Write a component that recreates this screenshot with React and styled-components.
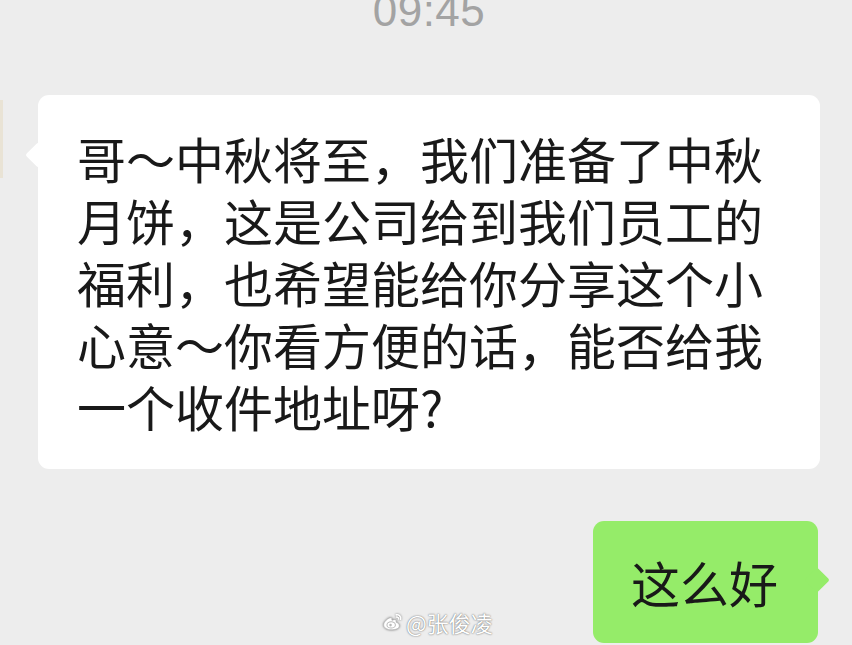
import React from 'react';
import styled, { createGlobalStyle } from 'styled-components';

const GlobalStyle = createGlobalStyle`
  html, body {
    margin: 0;
    padding: 0;
    background: #ededed;
    overflow: hidden;
  }
  body {
    font-family: "Noto Sans CJK SC", "Noto Sans", sans-serif;
  }
`;

const Screen = styled.div`
  width: 852px;
  height: 645px;
  background: #ededed;
  position: relative;
  overflow: hidden;
  display: flex;
  flex-direction: column;
`;

const Time = styled.div`
  font-family: "Liberation Sans", Arial, sans-serif;
  font-size: 44px;
  line-height: 44px;
  height: 33px;
  color: #a3a3a3;
  text-align: center;
  margin-top: -11px;
  padding-left: 6px;
  letter-spacing: 0.5px;
`;

const Row = styled.div`
  display: flex;
  align-items: flex-start;
  justify-content: ${(p) => (p.$mine ? 'flex-end' : 'flex-start')};
  margin-top: ${(p) => p.$top}px;
  padding-right: ${(p) => (p.$mine ? 34 : 32)}px;
`;

const Avatar = styled.div`
  width: 3px;
  height: 78px;
  margin-top: 5px;
  background: #e9e3d5;
  margin-right: 35px;
  flex-shrink: 0;
`;

const Bubble = styled.div`
  position: relative;
  background: ${(p) => (p.$mine ? '#95ec69' : '#ffffff')};
  border-radius: 11px;
  color: #191919;
  font-size: 49px;
  line-height: 62px;
  padding: ${(p) => (p.$mine ? '30px 40px 30px 38px' : '32px 45px 32px 39px')};
  width: ${(p) => (p.$mine ? 'auto' : '698px')};

  &::before {
    content: '';
    position: absolute;
    width: 18px;
    height: 18px;
    background: inherit;
    border-radius: 2px;
    transform: rotate(45deg);
    top: ${(p) => (p.$mine ? '50px' : '51px')};
    ${(p) => (p.$mine ? 'right: -8px;' : 'left: -9px;')}
  }
`;

const BubbleText = styled.span`
  position: relative;
  display: block;
`;

const Watermark = styled.div`
  position: absolute;
  left: 382px;
  top: 608px;
  display: flex;
  align-items: center;
  gap: 2px;
  color: #ffffff;
  font-size: 22px;
  line-height: 28px;
  text-shadow: 0 0 2px rgba(0, 0, 0, 0.45), 0 0 1px rgba(0, 0, 0, 0.35);
`;

const WeiboIcon = () => (
  <svg width="22" height="22" viewBox="0 0 24 24" style={{ filter: 'drop-shadow(0 0 1.2px rgba(0,0,0,0.5))' }}>
    <path
      d="M10.1 20.5c-4.6 0-8.3-2.3-8.3-5.3 0-1.6 1-3.4 2.7-5.1 2.3-2.3 5-3.4 6-2.4.5.4.5 1.2.2 2.1-.2.5.5.2.5.2 1.9-.8 3.5-.8 4.1.1.3.5.3 1.1 0 1.8-.1.4 0 .4.3.5 1.6.5 3.3 1.7 3.3 3.8 0 3.3-4.6 4.3-8.8 4.3z"
      fill="#ffffff"
      stroke="#b9b9b9"
      strokeWidth="0.8"
    />
    <ellipse cx="10" cy="15.2" rx="4.6" ry="3.4" fill="none" stroke="#b9b9b9" strokeWidth="1.1" />
    <circle cx="9.3" cy="15.4" r="1.4" fill="#b9b9b9" />
    <path d="M15.6 4.2c2.8-.6 5.4 1.9 4.6 4.8" fill="none" stroke="#ffffff" strokeWidth="1.8" strokeLinecap="round" />
    <path d="M15.9 6.6c1.3-.3 2.5.9 2.2 2.2" fill="none" stroke="#ffffff" strokeWidth="1.6" strokeLinecap="round" />
  </svg>
);

export default function App() {
  return (
    <>
      <GlobalStyle />
      <Screen>
        <Time>09:45</Time>
        <Row $top={73}>
          <Avatar />
          <Bubble>
            <BubbleText>
              哥～中秋将至，我们准备了中秋月饼，这是公司给到我们员工的福利，也希望能给你分享这个小心意～你看方便的话，能否给我一个收件地址呀?
            </BubbleText>
          </Bubble>
        </Row>
        <Row $mine $top={52}>
          <Bubble $mine>
            <BubbleText>这么好</BubbleText>
          </Bubble>
        </Row>
        <Watermark>
          <WeiboIcon />
          <span>@张俊凌</span>
        </Watermark>
      </Screen>
    </>
  );
}
